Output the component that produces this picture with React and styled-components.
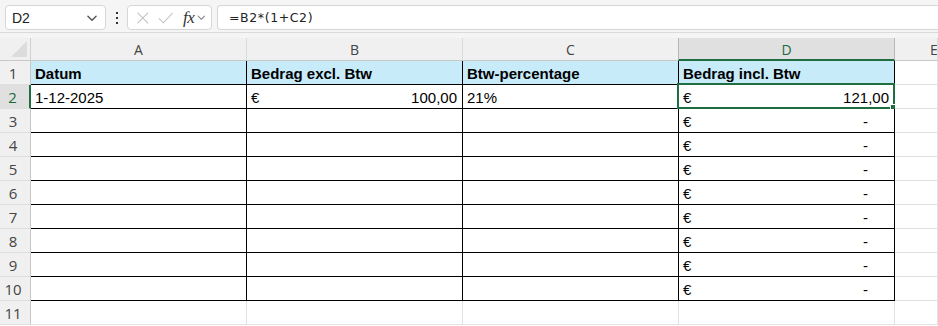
import styled, { createGlobalStyle } from 'styled-components';

const GlobalStyle = createGlobalStyle`
  html, body {
    margin: 0;
    padding: 0;
    background: #ffffff;
    overflow: hidden;
  }
  * {
    box-sizing: border-box;
  }
`;

const Page = styled.div`
  width: 938px;
  height: 326px;
  overflow: hidden;
  font-family: "Liberation Sans", Arial, sans-serif;
  background: #ffffff;
`;

const Toolbar = styled.div`
  height: 33px;
  display: flex;
  align-items: flex-start;
  padding: 5px 0 0 5px;
  background: #f5f5f5;
  border-bottom: 1px solid #dadada;
`;

const NameBox = styled.div`
  width: 101px;
  height: 25px;
  background: #ffffff;
  border: 1px solid #d6d6d6;
  border-radius: 4px;
  display: flex;
  align-items: center;
  justify-content: space-between;
  padding: 0 6px 0 6px;
  font-size: 14px;
  color: #222;
`;

const Dots = styled.div`
  width: 21px;
  height: 25px;
  display: flex;
  align-items: center;
  justify-content: center;
`;

const FxGroup = styled.div`
  width: 85px;
  height: 25px;
  background: #ffffff;
  border: 1px solid #d6d6d6;
  border-radius: 4px;
  display: flex;
  align-items: center;
  padding: 0 4px 0 8px;
  gap: 8px;
`;

const FxLabel = styled.span`
  font-family: "Liberation Serif", "DejaVu Serif", serif;
  font-style: italic;
  font-size: 17px;
  color: #333;
  margin-left: 2px;
  margin-right: -6px;
  letter-spacing: -0.5px;
`;

const FormulaBox = styled.div`
  flex: 1;
  height: 25px;
  margin-left: 5px;
  background: #ffffff;
  border: 1px solid #d6d6d6;
  border-right: none;
  border-radius: 4px 0 0 4px;
  display: flex;
  align-items: center;
  padding-left: 11px;
  font-family: "DejaVu Sans", sans-serif;
  font-size: 12.5px;
  letter-spacing: 0.6px;
  color: #222;
`;

const Gap = styled.div`
  height: 5px;
  background: #f5f5f5;
`;

const Sheet = styled.div`
  display: grid;
  grid-template-columns: 31px 216px 216px 216px 216px 1fr;
  grid-template-rows: 23px repeat(11, 24px);
`;

const Corner = styled.div`
  background: #f0f0f0;
  border-right: 1px solid #d0d0d0;
  border-bottom: 1px solid #c8c8c8;
  position: relative;
  &::after {
    content: '';
    position: absolute;
    right: 3px;
    bottom: 3px;
    width: 0;
    height: 0;
    border-left: 16px solid transparent;
    border-bottom: 16px solid #dcdcdc;
  }
`;

const ColHead = styled.div`
  background: ${({ $active }) => ($active ? '#e0e0e0' : '#f0f0f0')};
  color: ${({ $active }) => ($active ? '#1a6b3c' : '#444')};
  border-right: 1px solid ${({ $active }) => ($active ? '#b8b8b8' : '#dadada')};
  border-left: ${({ $active }) => ($active ? '1px solid #b8b8b8' : 'none')};
  margin-left: ${({ $active }) => ($active ? '-1px' : '0')};
  border-bottom: ${({ $active }) => ($active ? '2px solid #1e6e42' : '1px solid #c8c8c8')};
  display: flex;
  align-items: center;
  justify-content: ${({ $edge }) => ($edge ? 'flex-start' : 'center')};
  padding-left: ${({ $edge }) => ($edge ? '35px' : '0')};
  padding-top: 1px;
  font-family: "Open Sans", "Noto Sans", sans-serif;
  font-size: 14px;
  overflow: hidden;
`;

const RowHead = styled.div`
  background: ${({ $active }) => ($active ? '#e0e0e0' : '#f0f0f0')};
  color: ${({ $active }) => ($active ? '#1a6b3c' : '#444')};
  border-right: ${({ $active }) => ($active ? '2px solid #1e6e42' : '1px solid #c8c8c8')};
  border-bottom: 1px solid #dedede;
  display: flex;
  align-items: center;
  justify-content: center;
  padding-right: 4px;
  font-family: "Open Sans", "Noto Sans", sans-serif;
  font-size: 15px;
`;

const Cell = styled.div`
  position: relative;
  background: ${({ $head }) => ($head ? '#c8ebfa' : '#ffffff')};
  border-right: 1px solid ${({ $ruled }) => ($ruled ? '#000000' : '#e1e1e1')};
  border-bottom: 1px solid ${({ $ruled }) => ($ruled ? '#000000' : '#e1e1e1')};
  display: flex;
  align-items: center;
  justify-content: space-between;
  padding: 1px 5px 0 4px;
  font-size: 15px;
  font-weight: ${({ $head }) => ($head ? 700 : 400)};
  color: #000;
  white-space: nowrap;
`;

const Dash = styled.span`
  margin-right: 21px;
`;

const Selection = styled.div`
  position: absolute;
  left: -2px;
  top: -2px;
  right: -1px;
  bottom: -1px;
  border: 2px solid #1e6e42;
  pointer-events: none;
  &::after {
    content: '';
    position: absolute;
    right: -5px;
    bottom: -5px;
    width: 6px;
    height: 6px;
    background: #1e6e42;
    border: 1px solid #ffffff;
  }
`;

const Chevron = ({ size = 12, color = '#555' }) => (
  <svg width={size} height={size} viewBox="0 0 12 12" fill="none">
    <path d="M2.5 4.5 L6 8 L9.5 4.5" stroke={color} strokeWidth="1.2" strokeLinecap="round" strokeLinejoin="round" />
  </svg>
);

const VDots = () => (
  <svg width="4" height="14" viewBox="0 0 4 14">
    <rect x="1" y="1" width="2" height="2" fill="#333" />
    <rect x="1" y="6" width="2" height="2" fill="#333" />
    <rect x="1" y="11" width="2" height="2" fill="#333" />
  </svg>
);

const Cross = () => (
  <svg width="14" height="14" viewBox="0 0 14 14" fill="none">
    <path d="M1.5 1.5 L12.5 12.5 M12.5 1.5 L1.5 12.5" stroke="#c2c2c2" strokeWidth="1.1" />
  </svg>
);

const Check = () => (
  <svg width="16" height="14" viewBox="0 0 16 14" fill="none">
    <path d="M1 7.5 L5.5 12 L15 2" stroke="#c2c2c2" strokeWidth="1.1" />
  </svg>
);

const cols = ['A', 'B', 'C', 'D'];

const headers = ['Datum', 'Bedrag excl. Btw', 'Btw-percentage', 'Bedrag incl. Btw'];

const renderCell = (row, col) => {
  if (row === 1) return <span>{headers[col]}</span>;
  if (row === 2) {
    if (col === 0) return <span>1-12-2025</span>;
    if (col === 1) return (<><span>€</span><span>100,00</span></>);
    if (col === 2) return <span>21%</span>;
    if (col === 3) return (<><span>€</span><span>121,00</span></>);
  }
  if (col === 3 && row <= 10) return (<><span>€</span><Dash>-</Dash></>);
  return null;
};

const rows = Array.from({ length: 11 }, (_, i) => i + 1);

const Row = ({ r }) => (
  <>
    <RowHead $active={r === 2}>{r}</RowHead>
    {cols.map((c, i) => (
      <Cell key={c} $head={r === 1} $ruled={r <= 10}>
        {renderCell(r, i)}
        {r === 2 && c === 'D' && <Selection />}
      </Cell>
    ))}
    <Cell />
  </>
);

const App = () => {
  return (
    <Page>
      <GlobalStyle />
      <Toolbar>
        <NameBox>
          <span>D2</span>
          <Chevron size={14} />
        </NameBox>
        <Dots>
          <VDots />
        </Dots>
        <FxGroup>
          <Cross />
          <Check />
          <FxLabel>fx</FxLabel>
          <Chevron size={11} color="#888" />
        </FxGroup>
        <FormulaBox>=B2*(1+C2)</FormulaBox>
      </Toolbar>
      <Gap />
      <Sheet>
        <Corner />
        {cols.map((c) => (
          <ColHead key={c} $active={c === 'D'}>{c}</ColHead>
        ))}
        <ColHead $edge>E</ColHead>
        {rows.map((r) => (
          <Row key={r} r={r} />
        ))}
      </Sheet>
    </Page>
  );
};

export default App;
